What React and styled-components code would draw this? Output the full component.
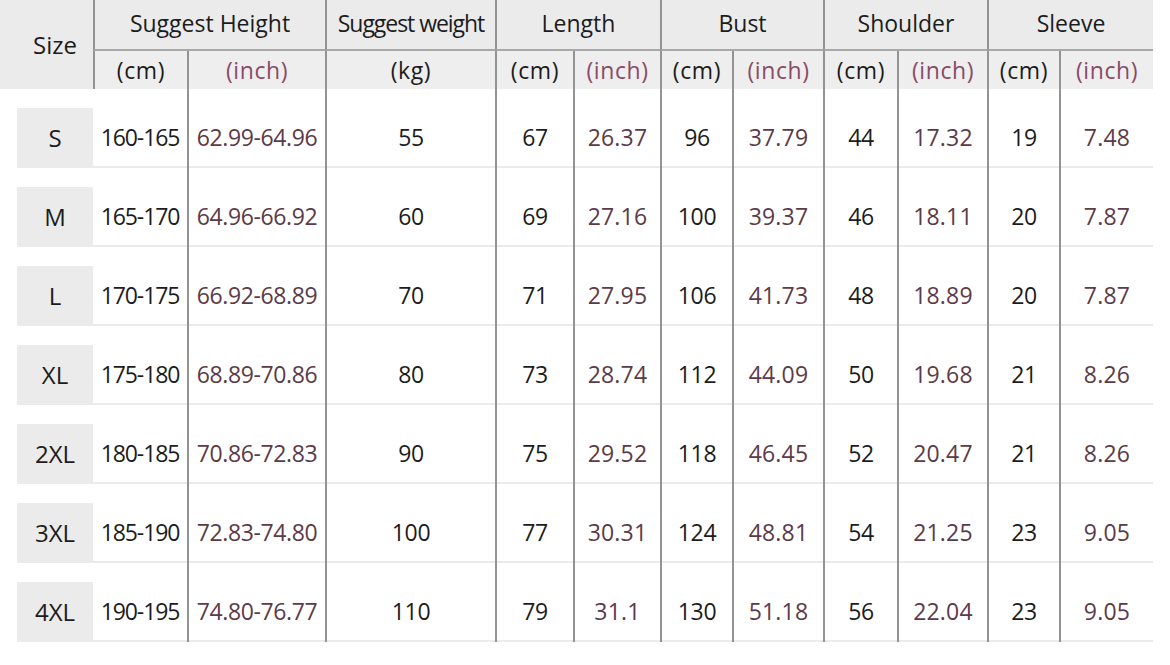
import React from "react";
import styled, { createGlobalStyle } from "styled-components";

const GlobalStyle = createGlobalStyle`
  html, body {
    margin: 0;
    padding: 0;
    background: #ffffff;
  }
  body {
    font-family: "Open Sans", "Noto Sans", sans-serif;
    color: #1c1c1c;
  }
`;

const COLS = "93px 94px 138px 170px 78px 87px 72px 91px 74px 90px 72px 94px";
const LINE = "#939393";

const Table = styled.div`
  width: 1153px;
  display: flex;
  flex-direction: column;
`;

const Head = styled.div`
  display: grid;
  grid-template-columns: ${COLS};
  grid-template-rows: 51px 38px;
  background: #ebebeb;
`;

const HeadCell = styled.div`
  grid-column: ${(p) => p.$col};
  grid-row: ${(p) => p.$row};
  display: flex;
  align-items: center;
  justify-content: center;
  box-sizing: border-box;
  border-left: ${(p) => (p.$line ? `2px solid ${LINE}` : "none")};
  border-bottom: ${(p) => (p.$under ? `2px solid #a8a8a8` : "none")};
  font-size: ${(p) => (p.$big ? "24px" : "23px")};
  font-weight: 500;
  letter-spacing: ${(p) => (p.$narrow ? "-1.05px" : "0")};
  color: #1c1c1c;
  white-space: nowrap;
  padding-left: ${(p) => (p.$big ? "17px" : "0")};
  padding-bottom: ${(p) => (p.$row === "1" ? "3px" : "0")};
`;

const UnitCell = styled(HeadCell)`
  font-size: 23px;
  font-weight: 400;
  letter-spacing: 0.6px;
  background: #eeeeee;
  color: ${(p) => (p.$inch ? "#8b4a66" : "#1c1c1c")};
`;

const Row = styled.div`
  display: grid;
  grid-template-columns: ${COLS};
  height: 79px;
`;

const Cell = styled.div`
  box-sizing: border-box;
  padding-top: 19px;
  padding-left: ${(p) => (p.$size ? "17px" : "0")};
  border-left: ${(p) => (p.$line ? `2px solid ${LINE}` : "none")};
  display: flex;
  flex-direction: column;
`;

const spacing = {
  size: "0",
  cm: "-0.3px",
  inch: "0.2px",
  cmRange: "-1.1px",
  inchRange: "-0.4px",
};

const CellBody = styled.div`
  flex: 1;
  display: flex;
  align-items: center;
  justify-content: center;
  border-bottom: 2px solid #ebebeb;
  background: ${(p) => (p.$kind === "size" ? "#ebebeb" : "transparent")};
  font-size: ${(p) => (p.$kind === "size" ? "24px" : "23px")};
  font-weight: ${(p) => (p.$kind === "size" ? 500 : 400)};
  letter-spacing: ${(p) => spacing[p.$kind]};
  color: ${(p) => (p.$kind === "inch" || p.$kind === "inchRange" ? "#5c3a48" : "#1c1c1c")};
  white-space: nowrap;
`;

const rows = [
  ["S", "160-165", "62.99-64.96", "55", "67", "26.37", "96", "37.79", "44", "17.32", "19", "7.48"],
  ["M", "165-170", "64.96-66.92", "60", "69", "27.16", "100", "39.37", "46", "18.11", "20", "7.87"],
  ["L", "170-175", "66.92-68.89", "70", "71", "27.95", "106", "41.73", "48", "18.89", "20", "7.87"],
  ["XL", "175-180", "68.89-70.86", "80", "73", "28.74", "112", "44.09", "50", "19.68", "21", "8.26"],
  ["2XL", "180-185", "70.86-72.83", "90", "75", "29.52", "118", "46.45", "52", "20.47", "21", "8.26"],
  ["3XL", "185-190", "72.83-74.80", "100", "77", "30.31", "124", "48.81", "54", "21.25", "23", "9.05"],
  ["4XL", "190-195", "74.80-76.77", "110", "79", "31.1", "130", "51.18", "56", "22.04", "23", "9.05"],
];

// what each body column holds; the size and height(cm) columns have no rule on the left
const kinds = ["size", "cmRange", "inchRange", "cm", "cm", "inch", "cm", "inch", "cm", "inch", "cm", "inch"];

const groups = [
  { label: "Suggest Height", col: "2 / 4" },
  { label: "Suggest weight", col: "4 / 5", narrow: true },
  { label: "Length", col: "5 / 7" },
  { label: "Bust", col: "7 / 9" },
  { label: "Shoulder", col: "9 / 11" },
  { label: "Sleeve", col: "11 / 13" },
];

const units = ["(cm)", "(inch)", "(kg)", "(cm)", "(inch)", "(cm)", "(inch)", "(cm)", "(inch)", "(cm)", "(inch)"];

export default function App() {
  return (
    <>
      <GlobalStyle />
      <Table>
        <Head>
          <HeadCell $col="1 / 2" $row="1 / 3" $big>Size</HeadCell>
          {groups.map((g) => (
            <HeadCell key={g.label} $col={g.col} $row="1" $line $under $narrow={g.narrow}>
              {g.label}
            </HeadCell>
          ))}
          {units.map((u, i) => (
            <UnitCell key={i} $col={`${i + 2} / ${i + 3}`} $row="2" $line $inch={u === "(inch)"}>
              {u}
            </UnitCell>
          ))}
        </Head>
        {rows.map((r) => (
          <Row key={r[0]}>
            {r.map((v, i) => (
              <Cell key={i} $size={i === 0} $line={i > 1}>
                <CellBody $kind={kinds[i]}>{v}</CellBody>
              </Cell>
            ))}
          </Row>
        ))}
      </Table>
    </>
  );
}
